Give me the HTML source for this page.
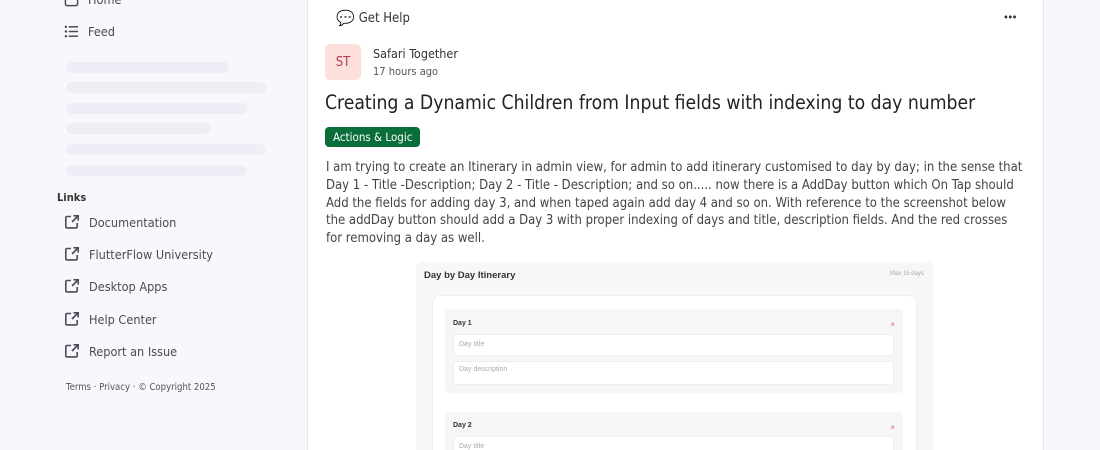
<!DOCTYPE html>
<html><head><style>
*{margin:0;padding:0;box-sizing:border-box}
html,body{width:1100px;height:450px;overflow:hidden}
body{background:#f8f8fc;font-family:"DejaVu Sans Condensed","DejaVu Sans",sans-serif;font-stretch:condensed;color:#3a3a46;position:relative}
.abs{position:absolute}
.nav{left:64px;font-size:12.6px;color:#4a4a58;display:flex;align-items:center}
.nav svg{margin-right:9px}
.sk{position:absolute;left:66px;height:11px;border-radius:6px;background:#eeeef6}
.card{left:307px;top:-2px;width:737px;height:452px;background:#fff;border:1px solid #e4e4ec;border-bottom:none}
.foot{left:66px;top:382px;font-size:9.5px;color:#555}
</style></head><body>
<div class="abs nav" style="top:-8px"><svg width="15" height="15" viewBox="0 0 16 16"><rect x="1.5" y="1.5" width="13" height="13" rx="2" fill="none" stroke="#4a4a58" stroke-width="1.6"/></svg>Home</div>
<div class="abs nav" style="top:24px"><svg width="15" height="15" viewBox="0 0 16 16" fill="#4a4a58"><circle cx="2" cy="3" r="1.3"/><circle cx="2" cy="8" r="1.3"/><circle cx="2" cy="13" r="1.3"/><rect x="5" y="2.2" width="10" height="1.6"/><rect x="5" y="7.2" width="10" height="1.6"/><rect x="5" y="12.2" width="10" height="1.6"/></svg>Feed</div>
<div class="sk" style="top:62px;width:163px"></div>
<div class="sk" style="top:82px;width:200px"></div>
<div class="sk" style="top:103px;width:182px"></div>
<div class="sk" style="top:123px;width:145px"></div>
<div class="sk" style="top:144px;width:200px"></div>
<div class="sk" style="top:165px;width:181px"></div>
<div class="abs" style="left:57px;top:191px;font-size:11px;font-weight:bold;color:#333">Links</div>
<div class="abs nav" style="top:214px"><svg width="16" height="16" viewBox="0 0 16 16" fill="none" stroke="#4a4a58" stroke-width="1.6"><path d="M7 2.5H3a1.2 1.2 0 0 0-1.2 1.2v9a1.2 1.2 0 0 0 1.2 1.2h9a1.2 1.2 0 0 0 1.2-1.2V9"/><path d="M9.5 1.8h4.7v4.7M14 2 8 8"/></svg>Documentation</div>
<div class="abs nav" style="top:246px"><svg width="16" height="16" viewBox="0 0 16 16" fill="none" stroke="#4a4a58" stroke-width="1.6"><path d="M7 2.5H3a1.2 1.2 0 0 0-1.2 1.2v9a1.2 1.2 0 0 0 1.2 1.2h9a1.2 1.2 0 0 0 1.2-1.2V9"/><path d="M9.5 1.8h4.7v4.7M14 2 8 8"/></svg>FlutterFlow University</div>
<div class="abs nav" style="top:278px"><svg width="16" height="16" viewBox="0 0 16 16" fill="none" stroke="#4a4a58" stroke-width="1.6"><path d="M7 2.5H3a1.2 1.2 0 0 0-1.2 1.2v9a1.2 1.2 0 0 0 1.2 1.2h9a1.2 1.2 0 0 0 1.2-1.2V9"/><path d="M9.5 1.8h4.7v4.7M14 2 8 8"/></svg>Desktop Apps</div>
<div class="abs nav" style="top:311px"><svg width="16" height="16" viewBox="0 0 16 16" fill="none" stroke="#4a4a58" stroke-width="1.6"><path d="M7 2.5H3a1.2 1.2 0 0 0-1.2 1.2v9a1.2 1.2 0 0 0 1.2 1.2h9a1.2 1.2 0 0 0 1.2-1.2V9"/><path d="M9.5 1.8h4.7v4.7M14 2 8 8"/></svg>Help Center</div>
<div class="abs nav" style="top:343px"><svg width="16" height="16" viewBox="0 0 16 16" fill="none" stroke="#4a4a58" stroke-width="1.6"><path d="M7 2.5H3a1.2 1.2 0 0 0-1.2 1.2v9a1.2 1.2 0 0 0 1.2 1.2h9a1.2 1.2 0 0 0 1.2-1.2V9"/><path d="M9.5 1.8h4.7v4.7M14 2 8 8"/></svg>Report an Issue</div>
<div class="abs foot">Terms · Privacy · © Copyright 2025</div>

<div class="abs card"></div>
<div class="abs" style="left:336px;top:9px;font-size:13px;color:#333;display:flex;align-items:center"><span style="font-size:15px;margin-right:4px">💬</span>Get Help</div>
<div class="abs" style="left:1003px;top:11px;font-size:11px;color:#333;letter-spacing:-1.5px">•••</div>
<div class="abs" style="left:325px;top:44px;width:36px;height:36px;border-radius:5px;background:#fde0dc;color:#b04050;font-size:13px;display:flex;align-items:center;justify-content:center">ST</div>
<div class="abs" style="left:373px;top:46px;font-size:12.5px;color:#333">Safari Together</div>
<div class="abs" style="left:373px;top:65px;font-size:11px;color:#555">17 hours ago</div>
<div class="abs" style="left:325px;top:91px;font-size:19.2px;color:#222;white-space:nowrap">Creating a Dynamic Children from Input fields with indexing to day number</div>
<div class="abs" style="left:325px;top:127px;height:20px;padding:0 8px;border-radius:4px;background:#0a6e3a;color:#fff;font-size:11.5px;line-height:20px">Actions &amp; Logic</div>
<div class="abs" style="left:326px;top:159px;width:700px;font-size:13px;line-height:17.8px;color:#444">I am trying to create an Itinerary in admin view, for admin to add itinerary customised to day by day; in the sense that Day 1 - Title -Description; Day 2 - Title - Description; and so on..... now there is a AddDay button which On Tap should Add the fields for adding day 3, and when taped again add day 4 and so on. With reference to the screenshot below the addDay button should add a Day 3 with proper indexing of days and title, description fields. And the red crosses for removing a day as well.</div>

<div class="abs" style="left:416px;top:262px;width:518px;height:188px;background:#f7f7f8;border-radius:6px 6px 0 0;font-family:'Liberation Sans',sans-serif;overflow:hidden">
  <div class="abs" style="left:8px;top:8px;font-size:9.5px;font-weight:bold;color:#333">Day by Day Itinerary</div>
  <div class="abs" style="right:10px;top:9px;font-size:6px;color:#aaa">Max 15 days</div>
  <div class="abs" style="left:16px;top:33px;width:485px;height:180px;background:#fff;border-radius:8px;border:1px solid #efefef">
    <div class="abs" style="left:12px;top:13px;width:458px;height:84px;background:#f6f6f7;border-radius:4px">
      <div class="abs" style="left:8px;top:11px;font-size:7px;font-weight:bold;color:#333">Day 1</div>
      <div class="abs" style="right:8px;top:11px;font-size:8px;color:#e06070">×</div>
      <div class="abs" style="left:8px;top:25px;width:441px;height:22px;background:#fff;border-radius:3px;border:1px solid #eee;font-size:7px;color:#aaa;padding:6px 5px">Day title</div>
      <div class="abs" style="left:8px;top:52px;width:441px;height:24px;background:#fff;border-radius:3px;border:1px solid #eee;font-size:7px;color:#aaa;padding:4px 5px">Day description</div>
    </div>
    <div class="abs" style="left:12px;top:116px;width:458px;height:84px;background:#f6f6f7;border-radius:4px">
      <div class="abs" style="left:8px;top:10px;font-size:7px;font-weight:bold;color:#333">Day 2</div>
      <div class="abs" style="right:8px;top:11px;font-size:8px;color:#e06070">×</div>
      <div class="abs" style="left:8px;top:24px;width:441px;height:22px;background:#fff;border-radius:3px;border:1px solid #eee;font-size:7px;color:#aaa;padding:6px 5px">Day title</div>
    </div>
  </div>
</div>
</body></html>
